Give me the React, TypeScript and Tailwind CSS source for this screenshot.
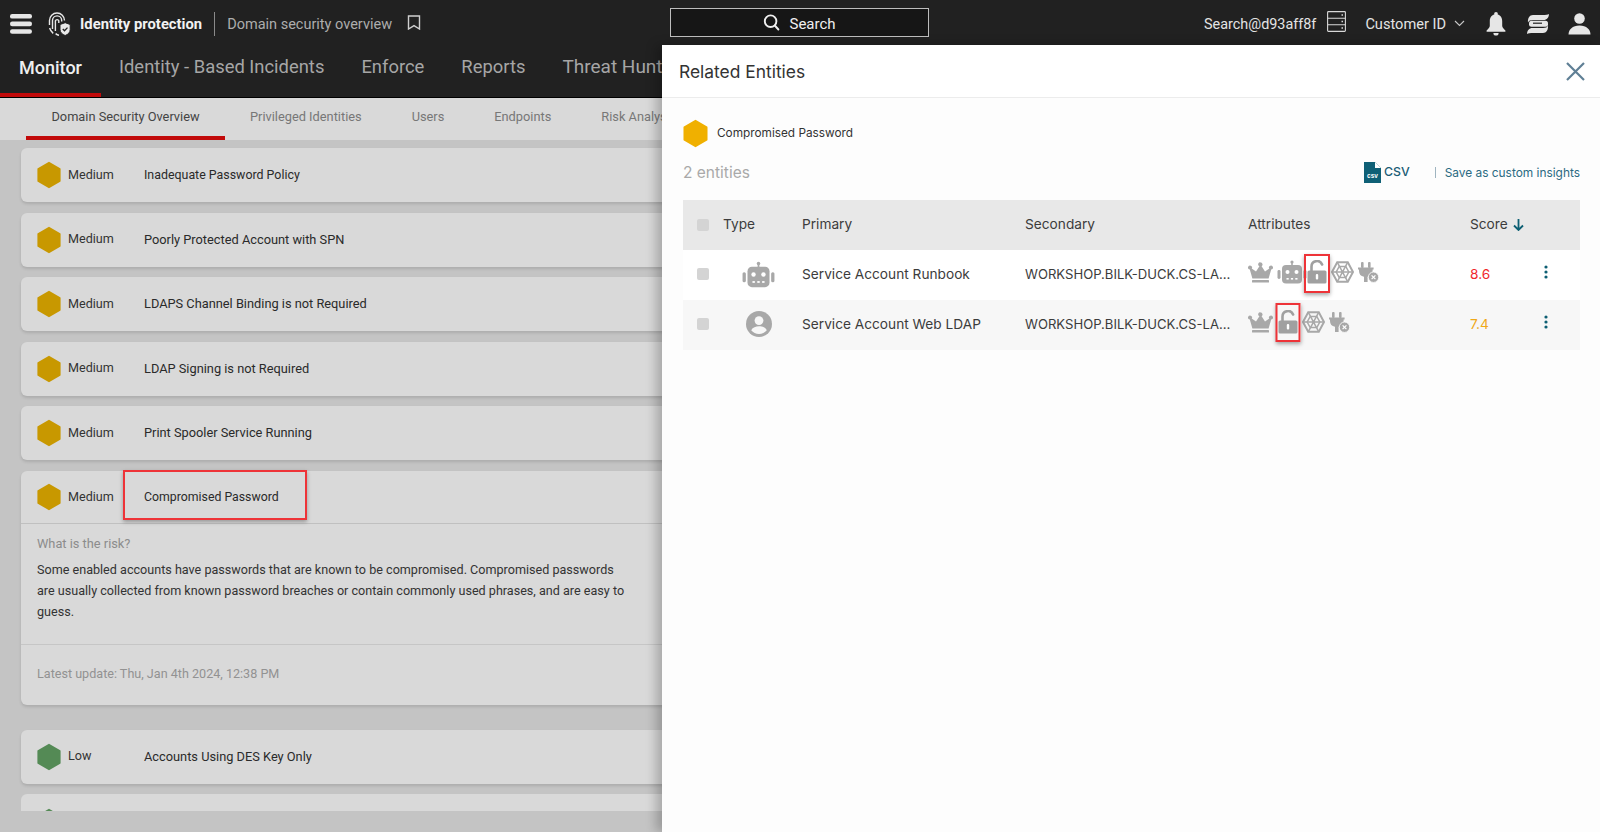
import React from "react";

const Hex = ({ color, w = 24, h = 28 }: { color: string; w?: number; h?: number }) => (
  <svg width={w} height={h} viewBox="0 0 24 28" className="shrink-0">
    <path d="M12 .8 23.2 7.2a.8.8 0 0 1 .4.7v12.2a.8.8 0 0 1-.4.7L12 27.2.8 20.8a.8.8 0 0 1-.4-.7V7.9a.8.8 0 0 1 .4-.7Z" fill={color} />
  </svg>
);

const Crown = () => (
  <svg width="27" height="21" viewBox="0 0 27 21" fill="#a8a8a8" className="shrink-0">
    <path d="M13.5 0.5a2 2 0 0 1 1.1 3.7l3.4 5.4 4.3-3a2 2 0 1 1 1.9.9l-2.6 9H5.4l-2.6-9a2 2 0 1 1 1.9-.9l4.3 3 3.4-5.4a2 2 0 0 1 1.6-3.7Z" />
    <rect x="5" y="18" width="17" height="2.6" rx="0.6" />
  </svg>
);

const Robot = ({ w = 30, h = 24 }: { w?: number; h?: number }) => (
  <svg width={w} height={h} viewBox="0 0 30 24" fill="#a8a8a8" className="shrink-0">
    <circle cx="15" cy="2" r="1.6" />
    <rect x="14.2" y="2" width="1.6" height="4" />
    <rect x="5" y="5" width="20" height="18.5" rx="4" />
    <rect x="0.5" y="10" width="3" height="9" rx="1.4" />
    <rect x="26.5" y="10" width="3" height="9" rx="1.4" />
    <circle cx="10.5" cy="12" r="2" fill="#fff" />
    <circle cx="19.5" cy="12" r="2" fill="#fff" />
    <rect x="9.5" y="18" width="2.2" height="1.6" fill="#fff" />
    <rect x="13.9" y="18" width="2.2" height="1.6" fill="#fff" />
    <rect x="18.3" y="18" width="2.2" height="1.6" fill="#fff" />
  </svg>
);

const Lock = () => (
  <svg width="20" height="24" viewBox="0 0 20 24" className="shrink-0">
    <path d="M4.5 11V6.5a5.5 5.5 0 0 1 10.6-2" fill="none" stroke="#a0a0a0" strokeWidth="2.6" strokeLinecap="round" />
    <rect x="0.5" y="10.5" width="19" height="13" rx="1.6" fill="#a0a0a0" />
    <rect x="8.8" y="14" width="2.4" height="5.5" rx="1" fill="#fff" />
  </svg>
);

const Web = () => (
  <svg width="23" height="22" viewBox="0 0 23 22" fill="none" stroke="#a8a8a8" strokeWidth="1.5" className="shrink-0">
    <path d="M6.2 1.2h10.6l5.2 9.8-5.2 9.8H6.2L1 11Z" strokeWidth="2" />
    <path d="M8.2 5.5h6.6l3 5.5-3 5.5H8.2L5.2 11Z" />
    <path d="M6.2 1.2 16.8 20.8M16.8 1.2 6.2 20.8M1 11h21" />
  </svg>
);

const Plug = () => (
  <svg width="21" height="21" viewBox="0 0 21 21" className="shrink-0">
    <rect x="3" y="0" width="2.6" height="6" rx="1" fill="#a8a8a8" />
    <rect x="10" y="0" width="2.6" height="6" rx="1" fill="#a8a8a8" />
    <path d="M0 5.5h15.6v2h-1v1.5a6 6 0 0 1-5 5.8V20H6v-5.2a6 6 0 0 1-5-5.8V7.5H0Z" fill="#a8a8a8" />
    <circle cx="15.5" cy="15.2" r="5.2" fill="#a8a8a8" stroke="#fff" strokeWidth="0.8" />
    <path d="M13.6 13.3l3.8 3.8M17.4 13.3l-3.8 3.8" stroke="#fff" strokeWidth="1.2" />
  </svg>
);

const UserCircle = () => (
  <svg width="26" height="26" viewBox="0 0 26 26" className="shrink-0">
    <circle cx="13" cy="13" r="13" fill="#a8a8a8" />
    <circle cx="13" cy="9.6" r="4.4" fill="#f7f7f7" />
    <path d="M5.2 19.2c1.6-3 4.6-4 7.8-4s6.2 1 7.8 4a10 10 0 0 1-15.6 0Z" fill="#f7f7f7" />
  </svg>
);

const Marked = ({ w, top, children }: { w: string; top: string; children: React.ReactNode }) => (
  <span className="relative flex shrink-0">
    {children}
    <span className={`absolute ${w} h-[39px] ${top} left-1/2 -translate-x-1/2 border-2 border-[#ee3338] shadow-[0_2px_4px_rgba(0,0,0,0.35)]`} />
  </span>
);

const Card = ({ title, color = "#c89800", level = "Medium", titleSize = "text-[12.8px]" }: { title: string; color?: string; level?: string; titleSize?: string }) => (
  <div className="mb-[10.5px] flex h-[54px] items-center rounded-md bg-[#d9d9d9] pl-[16px] font-['Roboto',sans-serif] shadow-[0_2px_3px_rgba(0,0,0,0.12)]">
    <Hex color={color} />
    <span className="ml-[7px] w-[76px] text-[12.6px] text-[#333]">{level}</span>
    <span className={`${titleSize} text-[#2a2a2a]`}>{title}</span>
  </div>
);

const Dots = () => (
  <svg width="4" height="14" viewBox="0 0 4 14" fill="#0d5f73" className="-translate-y-[2px]">
    <circle cx="2" cy="2" r="1.6" />
    <circle cx="2" cy="7" r="1.6" />
    <circle cx="2" cy="12" r="1.6" />
  </svg>
);

const navItems = ["Identity - Based Incidents", "Enforce", "Reports"];

export default function App() {
  return (
    <div className="relative h-[832px] w-[1600px] overflow-hidden bg-[#c4c4c4] font-['Inter',sans-serif]">
      {/* top bar */}
      <header className="flex h-[45px] items-center bg-[#212121] pt-[2px] font-['Roboto',sans-serif] text-white">
        <svg width="22" height="20" viewBox="0 0 22 20" fill="#e6e6e6" className="ml-[10px] shrink-0">
          <rect x="0" y="0" width="22" height="4.6" rx="2.2" />
          <rect x="0" y="7.6" width="22" height="4.6" rx="2.2" />
          <rect x="0" y="15.2" width="22" height="4.6" rx="2.2" />
        </svg>
        <svg width="24" height="25" viewBox="0 0 24 25" fill="none" stroke="#e8e8e8" strokeWidth="1.4" className="ml-[15px] shrink-0">
          <path d="M2.5 14V9.5a7.5 7.5 0 0 1 15 0" />
          <path d="M5.5 18V9.5a4.6 4.6 0 0 1 9.2 0v1" />
          <path d="M8.4 20V9.8a1.8 1.8 0 0 1 3.4 0V12" />
          <path d="M2.6 17c.6 2 2 4 3.6 5.4M8.6 22.6c1 .8 2 1.4 3.4 1.6" />
          <path d="M13 13.5l5.2-1.8 5 1.8v5c0 3-2.2 5-5 6-2.9-1-5.2-3-5.2-6Z" fill="#e8e8e8" stroke="#212121" strokeWidth="1" />
          <path d="M15.8 18l1.7 1.8 3-3.2" stroke="#212121" strokeWidth="1.3" />
        </svg>
        <span className="ml-[9px] pt-[1px] text-[14.8px] font-bold text-[#f2f2f2]">Identity protection</span>
        <span className="ml-[12px] h-[24px] w-px bg-[#8a8a8a]" />
        <span className="ml-[12px] pt-[2px] text-[14.5px] text-[#adadad]">Domain security overview</span>
        <svg width="14" height="15" viewBox="0 0 14 15" fill="none" stroke="#cfcfcf" strokeWidth="1.4" className="ml-[15px] shrink-0 -translate-y-[1px]">
          <path d="M1.5 1h11v13L7 10.6 1.5 14Z" />
        </svg>
        <div className="ml-[249px] flex h-[29px] w-[259px] -translate-y-[1px] items-center justify-center gap-[9px] border border-[#bdbdbd] bg-[#161616]">
          <svg width="17" height="17" viewBox="0 0 17 17" fill="none" stroke="#f0f0f0" strokeWidth="1.9">
            <circle cx="7.6" cy="7.2" r="5.8" />
            <path d="M11.8 11.5l3.6 4" strokeLinecap="round" />
          </svg>
          <span className="pt-[3px] text-[15px] text-[#f0f0f0]">Search</span>
        </div>
        <span className="ml-[275px] pt-[3px] text-[14.4px] text-[#e4e4e4]">Search@d93aff8f</span>
        <svg width="19" height="21" viewBox="0 0 19 21" fill="none" stroke="#d8d8d8" strokeWidth="1.1" className="ml-[11px] shrink-0 -translate-y-[2px]">
          <rect x="0.6" y="0.6" width="17.8" height="19.8" rx="0.8" />
          <path d="M.6 7.2h17.8M.6 13.8h17.8" />
          <path d="M14.5 4h1.5M14.5 10.5h1.5M14.5 17h1.5" strokeWidth="1.4" />
        </svg>
        <span className="ml-[19px] pt-[3px] text-[14.6px] text-[#e4e4e4]">Customer ID</span>
        <svg width="11" height="7" viewBox="0 0 11 7" fill="none" stroke="#c8c8c8" strokeWidth="1.1" className="ml-[8px] shrink-0">
          <path d="M1 1l4.5 4.5L10 1" />
        </svg>
        <svg width="20" height="24" viewBox="0 0 20 24" fill="#e6e6e6" className="ml-[21px] shrink-0">
          <circle cx="10" cy="2" r="1.9" />
          <path d="M10 2.2c4 0 6.2 3 6.2 7v4.6c0 1.6 1.4 3 3.2 4.6v1.4H.6v-1.4c1.8-1.6 3.2-3 3.2-4.6V9.2c0-4 2.2-7 6.2-7Z" />
          <path d="M7.4 21h5.2a2.6 2.6 0 0 1-5.2 0Z" />
        </svg>
        <svg width="22" height="20" viewBox="0 0 22 20" fill="#e6e6e6" className="ml-[21px] shrink-0">
          <path d="M6 1h10c2.500 0 5-.2 6-1-.2 3.600-2 6-5.500 6H6C3.500 6 1.500 6.800 1 8.500c-.4-4 1.500-7.500 5-7.500Z" />
          <rect x="2" y="6.800" width="19" height="6" rx="2.500" />
          <path d="M16 19H6c-2.500 0-5 .2-6 1 .2-3.600 2-6 5.500-6H16c2.500 0 4.500-.8 5-2.500.4 4-1.500 7.500-5 7.500Z" />
          <path d="M6 9.200h9" stroke="#212121" strokeWidth="1.200" />
        </svg>
        <svg width="23" height="22" viewBox="0 0 23 22" fill="#e6e6e6" className="ml-[19px] shrink-0">
          <circle cx="11.500" cy="5.500" r="5.300" />
          <path d="M.5 21.500c0-5 4-9 11-9s11 4 11 9Z" />
        </svg>
      </header>

      {/* product nav */}
      <nav className="flex h-[53px] items-stretch overflow-hidden whitespace-nowrap border-b border-black bg-[#212121] font-['Roboto',sans-serif] text-[18.4px] text-[#a6a6a6]">
        <span className="flex w-[101px] items-center justify-center border-b-[4px] border-[#c20a0a] pb-[4px] text-[18px] font-medium text-[#efefef]">Monitor</span>
        {navItems.map((t, i) => (
          <span key={t} className={`flex items-center pb-[8px] ${i === 0 ? "ml-[18px]" : "ml-[37px]"}`}>{t}</span>
        ))}
        <span className="ml-[37px] flex items-center pb-[8px] text-[19px]">Threat Hunting</span>
      </nav>

      {/* sub tabs */}
      <div className="flex h-[42px] items-stretch overflow-hidden whitespace-nowrap bg-[#d9d9d9] pl-[26px] font-['Roboto',sans-serif] text-[12.8px] text-[#777]">
        <span className="flex w-[199px] items-center justify-center border-b-[4px] border-[#c20a0a] text-[#444]">Domain Security Overview</span>
        <span className="ml-[25px] flex items-center pb-[4px]">Privileged Identities</span>
        <span className="ml-[50px] flex items-center pb-[4px]">Users</span>
        <span className="ml-[50px] flex items-center pb-[4px]">Endpoints</span>
        <span className="ml-[50px] flex items-center pb-[4px]">Risk Analysis</span>
      </div>

      {/* cards */}
      <main className="h-[671px] overflow-hidden pl-[21px] pt-[8px]">
        <Card title="Inadequate Password Policy" titleSize="text-[12.4px]" />
        <Card title="Poorly Protected Account with SPN" />
        <Card title="LDAPS Channel Binding is not Required" />
        <Card title="LDAP Signing is not Required" />
        <Card title="Print Spooler Service Running" />
        <div className="mb-[25px] h-[234px] rounded-md bg-[#d9d9d9] font-['Roboto',sans-serif] shadow-[0_2px_3px_rgba(0,0,0,0.12)]">
          <div className="flex h-[53px] items-center border-b border-[#c0c0c0] pl-[16px]">
            <Hex color="#c89800" />
            <span className="ml-[7px] w-[76px] translate-y-[1px] text-[12.6px] text-[#333]">Medium</span>
            <span className="relative translate-y-[1px] text-[12.3px] text-[#2a2a2a]">
              Compromised Password
              <span className="absolute -left-[21px] -top-[18px] h-[50px] w-[184px] border-2 border-[#ee3338] shadow-[0_2px_4px_rgba(0,0,0,0.3)]" />
            </span>
          </div>
          <div className="h-[121px] border-b border-[#c6c6c6] pl-[16px] pt-[11px]">
            <p className="text-[12.8px] leading-[18px] text-[#8c8c8c]">What is the risk?</p>
            <p className="mt-[6px] w-[590px] text-[12.6px] leading-[21px] text-[#333]">
              Some enabled accounts have passwords that are known to be compromised. Compromised passwords are usually collected from known password breaches or contain commonly used phrases, and are easy to guess.
            </p>
          </div>
          <p className="pl-[16px] pt-[20px] text-[12.6px] leading-[18px] text-[#929292]">Latest update: Thu, Jan 4th 2024, 12:38 PM</p>
        </div>
        <Card title="Accounts Using DES Key Only" color="#548a55" level="Low" />
        <div className="h-[54px] rounded-md bg-[#d9d9d9] pl-[16px] pt-[14px]">
          <Hex color="#548a55" />
        </div>
      </main>

      {/* drawer */}
      <aside className="absolute bottom-0 left-[662px] right-0 top-[45px] bg-[#fdfdfd] shadow-[-6px_0_10px_rgba(0,0,0,0.22)]">
        <div className="flex h-[53px] items-center justify-between border-b border-[#ececec] bg-white pl-[17px] pr-[15px]">
          <h2 className="pt-[2px] text-[17.4px] font-normal text-[#333]">Related Entities</h2>
          <svg width="19" height="19" viewBox="0 0 19 19" fill="none" stroke="#5f7f95" strokeWidth="2.200">
            <path d="M1 1l17 17M18 1 1 18" />
          </svg>
        </div>
        <div className="pl-[21px] pr-[20px]">
          <div className="mt-[21px] flex items-center">
            <Hex color="#f0b000" w={25} h={29} />
            <span className="ml-[9px] text-[11.8px] text-[#333]">Compromised Password</span>
          </div>
          <div className="mt-[11px] flex h-[27px] items-center whitespace-nowrap">
            <span className="text-[15.5px] text-[#a9a9a9]">2 entities</span>
            <svg width="17" height="21" viewBox="0 0 17 21" className="ml-auto shrink-0">
              <path d="M0 0h11l6 6v15H0Z" fill="#0f6076" />
              <path d="M11 0v6h6Z" fill="#fff" />
              <text x="8.500" y="16" textAnchor="middle" fontSize="6.500" fontWeight="700" fill="#fff" fontFamily="Liberation Sans">csv</text>
            </svg>
            <span className="ml-[3px] text-[12.3px] font-medium text-[#1a5c75]">CSV</span>
            <span className="ml-[25px] h-[11px] w-px bg-[#9fb4c0]" />
            <span className="ml-[9px] text-[11.9px] text-[#2b6a82]">Save as custom insights</span>
          </div>

          <div className="mt-[14px] text-[13.7px] text-[#3c3c3c]">
            <div className="flex h-[50px] items-center bg-[#e8e8e8] pb-[1px]">
              <span className="ml-[14px] h-[12px] w-[12px] rounded-[2px] bg-[#d4d4d4]" />
              <span className="ml-[14px] w-[79px]">Type</span>
              <span className="w-[223px]">Primary</span>
              <span className="w-[223px]">Secondary</span>
              <span className="w-[222px]">Attributes</span>
              <span>Score</span>
              <svg width="11" height="12" viewBox="0 0 11 12" fill="none" stroke="#0d5f73" strokeWidth="1.800" className="ml-[5px]">
                <path d="M5.500 0v11M1 6.500l4.500 4.500L10 6.500" />
              </svg>
            </div>
            <div className="flex h-[50px] items-center bg-white pb-[2px]">
              <span className="ml-[14px] h-[12px] w-[12px] rounded-[2px] bg-[#d4d4d4]" />
              <span className="ml-[33px] flex w-[60px]"><Robot w={33} h={27} /></span>
              <span className="w-[223px]">Service Account Runbook</span>
              <span className="w-[223px] truncate pr-[11px] pt-[1px] text-[13.1px]">WORKSHOP.BILK-DUCK.CS-LAB.LOCAL</span>
              <span className="-ml-[1px] flex w-[223px] -translate-y-[2px] items-center">
                <Crown />
                <span className="ml-[3px]"><Robot /></span>
                <span className="ml-[0px]">
                  <Marked w="w-[26px]" top="-top-[6px]"><Lock /></Marked>
                </span>
                <span className="ml-[4px]"><Web /></span>
                <span className="ml-[4px]"><Plug /></span>
              </span>
              <span className="w-[74px] text-[#f0282d]">8.6</span>
              <Dots />
            </div>
            <div className="flex h-[50px] items-center bg-[#f7f7f7] pb-[2px]">
              <span className="ml-[14px] h-[12px] w-[12px] rounded-[2px] bg-[#d4d4d4]" />
              <span className="ml-[37px] flex w-[56px]"><UserCircle /></span>
              <span className="w-[223px]">Service Account Web LDAP</span>
              <span className="w-[223px] truncate pr-[11px] pt-[1px] text-[13.1px]">WORKSHOP.BILK-DUCK.CS-LAB.LOCAL</span>
              <span className="-ml-[1px] flex w-[223px] -translate-y-[2px] items-center">
                <Crown />
                <span className="ml-[4px]">
                  <Marked w="w-[25px]" top="-top-[7px]"><Lock /></Marked>
                </span>
                <span className="ml-[4px]"><Web /></span>
                <span className="ml-[4px]"><Plug /></span>
              </span>
              <span className="w-[74px] text-[#f0a818]">7.4</span>
              <Dots />
            </div>
          </div>
        </div>
      </aside>
    </div>
  );
}
